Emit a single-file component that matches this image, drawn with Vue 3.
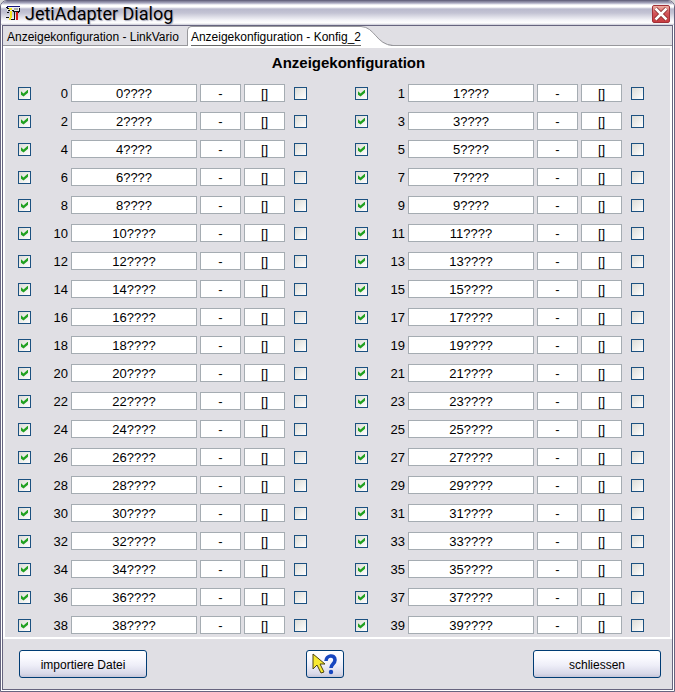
<script setup>
import { ref, reactive } from 'vue'

const tabs = ['Anzeigekonfiguration - LinkVario', 'Anzeigekonfiguration - Konfig_2']
const active = ref(1)
const entries = reactive(
  Array.from({ length: 40 }, (_, i) => ({
    id: i,
    enabled: true,
    name: `${i}????`,
    value: '-',
    unit: '[]',
    alarm: false,
  })),
)
</script>

<template>
  <div class="window">
    <header class="titlebar">
      <svg class="app-icon" viewBox="0 0 16 16" aria-hidden="true" shape-rendering="crispEdges">
        <path fill="#e8e8ee" d="M1 2h13v3H1z" />
        <path fill="#10107c" d="M1 0h13v1H1z" />
        <path fill="#111" d="M0 1h2v1H0zM1 2h2v1H1zM2 4h2v1H2zM6 4h2v1H6zM7 5h7v1H7zM13 2h1v3h-1zM1 6h2v1H1zM8 6h1v8H8zM12 6h1v1h-1zM0 11h3v1H0zM5 13h3v1H5z" />
        <path fill="#f4e51c" d="M3 2h3v2H3zM4 5h2v7H4zM3 12h2v2H3z" />
        <path fill="#d81818" d="M10 6h2v8h-2z" />
        <path fill="#aaa" d="M8 2h4v2H8z" />
      </svg>
      <h1>JetiAdapter Dialog</h1>
      <button class="close" type="button" aria-label="Close">
        <svg viewBox="0 0 16 16" aria-hidden="true">
          <path d="M2.500 2.500l11 11M13.500 2.500l-11 11" stroke="#7c2020" stroke-width="4" />
          <path d="M2.500 2.500l11 11M13.500 2.500l-11 11" stroke="#fff" stroke-width="2.600" />
        </svg>
      </button>
    </header>

    <main class="body">
      <nav class="tabs" role="tablist">
        <button
          v-for="(tab, i) in tabs"
          :key="tab"
          type="button"
          role="tab"
          class="tab"
          :class="{ active: i === active }"
          :aria-selected="i === active"
          @click="active = i"
        >
          <span>{{ tab }}</span>
          <svg v-if="i === active" class="slope" viewBox="0 0 32 21" aria-hidden="true">
            <path fill="#fff" d="M0 0.5C14 1 15 18.500 30 19.500V21H0z" />
            <path fill="none" stroke="#98989c" d="M0 0.500C14 1 15 18.500 32 19.500" />
          </svg>
        </button>
      </nav>

      <section class="panel">
        <h2>Anzeigekonfiguration</h2>
        <div class="grid">
          <div v-for="e in entries" :key="e.id" class="entry">
            <input :id="`on-${e.id}`" v-model="e.enabled" type="checkbox" class="check" />
            <label :for="`on-${e.id}`">{{ e.id }}</label>
            <input v-model="e.name" type="text" class="field" :aria-label="`Name ${e.id}`" />
            <input v-model="e.value" type="text" class="field" :aria-label="`Wert ${e.id}`" />
            <input v-model="e.unit" type="text" class="field" :aria-label="`Einheit ${e.id}`" />
            <input v-model="e.alarm" type="checkbox" class="check last" :aria-label="`Alarm ${e.id}`" />
          </div>
        </div>
      </section>

      <footer class="actions">
        <button type="button" class="btn">importiere Datei</button>
        <button type="button" class="btn help" aria-label="Hilfe">
          <svg viewBox="0 0 28 24" aria-hidden="true">
            <path d="M2 2v15l4-4 4 8 3-1-4-8h5z" fill="#f8ea30" stroke="#4c4410" stroke-width="1" />
            <path d="M15 9c0-6 9-7 9-1 0 4-4 4-4 8" fill="none" stroke="#1746c0" stroke-width="3.600" />
            <circle cx="20" cy="20" r="2.200" fill="#1746c0" />
          </svg>
        </button>
        <button type="button" class="btn">schliessen</button>
      </footer>
    </main>
  </div>
</template>

<style>
body {
  margin: 0;
  background: #d8d8d8;
}
</style>

<style scoped>
* {
  box-sizing: border-box;
}
.window {
  min-height: 100vh;
  display: flex;
  flex-direction: column;
  border: 1px solid #66647f;
  border-radius: 7px 7px 0 0;
  background: #fff;
  overflow: hidden;
  font-family: "Liberation Sans", Arial, sans-serif;
  font-size: 12px;
  color: #000;
}
button,
input {
  font: inherit;
  color: inherit;
  margin: 0;
}
.titlebar {
  height: 24px;
  display: flex;
  align-items: center;
  padding: 2px 4px 0 5px;
  background: linear-gradient(#77758f 0, #a9a8c0 2px, #fff 4px, #fff 6px, #b9b9cd 8px, #c4c4d4 12px, #f4f4f8 19px, #fff 22px, #c8c8d4 24px);
}
.app-icon {
  width: 16px;
  height: 16px;
}
h1 {
  flex: 1;
  margin: 0 0 0 3px;
  font-family: Roboto, "Liberation Sans", sans-serif;
  font-size: 18px;
  line-height: 20px;
  font-weight: 400;
  text-shadow: 1px 1px 1px #a8a8b8;
}
.close {
  width: 18px;
  height: 18px;
  padding: 0;
  border: 1px solid #a03038;
  border-radius: 2px;
  background: linear-gradient(#eeb0a4, #d2555a 45%, #c83c40);
}
.close svg {
  display: block;
  width: 16px;
  height: 16px;
}
.body {
  flex: 1;
  display: flex;
  flex-direction: column;
  margin: 0 1px 1px;
  border: 1px solid #66647f;
  background: #e0dfe4;
}
.tabs {
  display: flex;
  height: 20px;
  border-bottom: 1px solid #98989c;
}
.tab {
  position: relative;
  height: 19px;
  padding: 3px 8px 0 4px;
  border: 0;
  background: none;
  line-height: 16px;
  white-space: nowrap;
}
.tab span {
  display: block;
}
.tab.active {
  height: 20px;
  padding: 2px 0 0 3px;
  border: solid #98989c;
  border-width: 1px 0 0 1px;
  border-radius: 5px 0 0 0;
  background: #fff;
}
.tab.active span {
  border-bottom: 1px solid #666;
}
.slope {
  position: absolute;
  left: 100%;
  top: -1px;
  width: 32px;
  height: 21px;
}
.panel {
  border: 2px solid #fff;
  padding: 4px 13px 0;
}
h2 {
  margin: 0 0 10px;
  padding-left: 22px;
  font-size: 15px;
  line-height: 22px;
  text-align: center;
}
.grid {
  display: grid;
  grid-template-columns: 1fr 1fr;
  gap: 10px 48px;
  padding-right: 13px;
  padding-bottom: 3px;
}
.entry {
  display: grid;
  grid-template-columns: 13px 34px minmax(0, 126fr) minmax(0, 41fr) minmax(0, 41fr) 19px;
  column-gap: 3px;
  align-items: center;
}
.entry label {
  height: 18px;
  padding-top: 2px;
  text-align: right;
  font-size: 13px;
  line-height: 16px;
}
.field {
  width: 100%;
  height: 18px;
  padding: 1px 0 0;
  border: 1px solid #a5acb2;
  border-radius: 0;
  background: #fff;
  text-align: center;
  font-size: 13px;
}
.check {
  appearance: none;
  width: 13px;
  height: 13px;
  border: 1px solid #1c5180;
  background: linear-gradient(135deg, #dcdcd7, #fff);
}
.check.last {
  justify-self: end;
}
.check:checked {
  display: grid;
  place-items: center;
}
.check:checked::after {
  content: "";
  width: 7px;
  height: 7px;
  background: #21a121;
  clip-path: polygon(0 24%, 36% 56%, 100% 0, 100% 48%, 36% 100%, 0 76%);
}
.actions {
  flex: 1;
  display: grid;
  grid-template-columns: 287fr 38px 317fr;
  align-items: start;
  padding: 11px 11px 10px 16px;
}
.btn {
  width: 128px;
  height: 28px;
  padding: 1px 0 0;
  border: 1px solid #003c74;
  border-radius: 3px;
  background: linear-gradient(#fff, #fbfbff 25%, #eeeef8 55%, #d8d8e8 88%, #c4c4d8);
}
.btn:last-child {
  justify-self: end;
}
.btn.help {
  width: 38px;
  padding: 0;
  display: grid;
  place-items: center;
}
.help svg {
  width: 28px;
  height: 24px;
}
</style>
